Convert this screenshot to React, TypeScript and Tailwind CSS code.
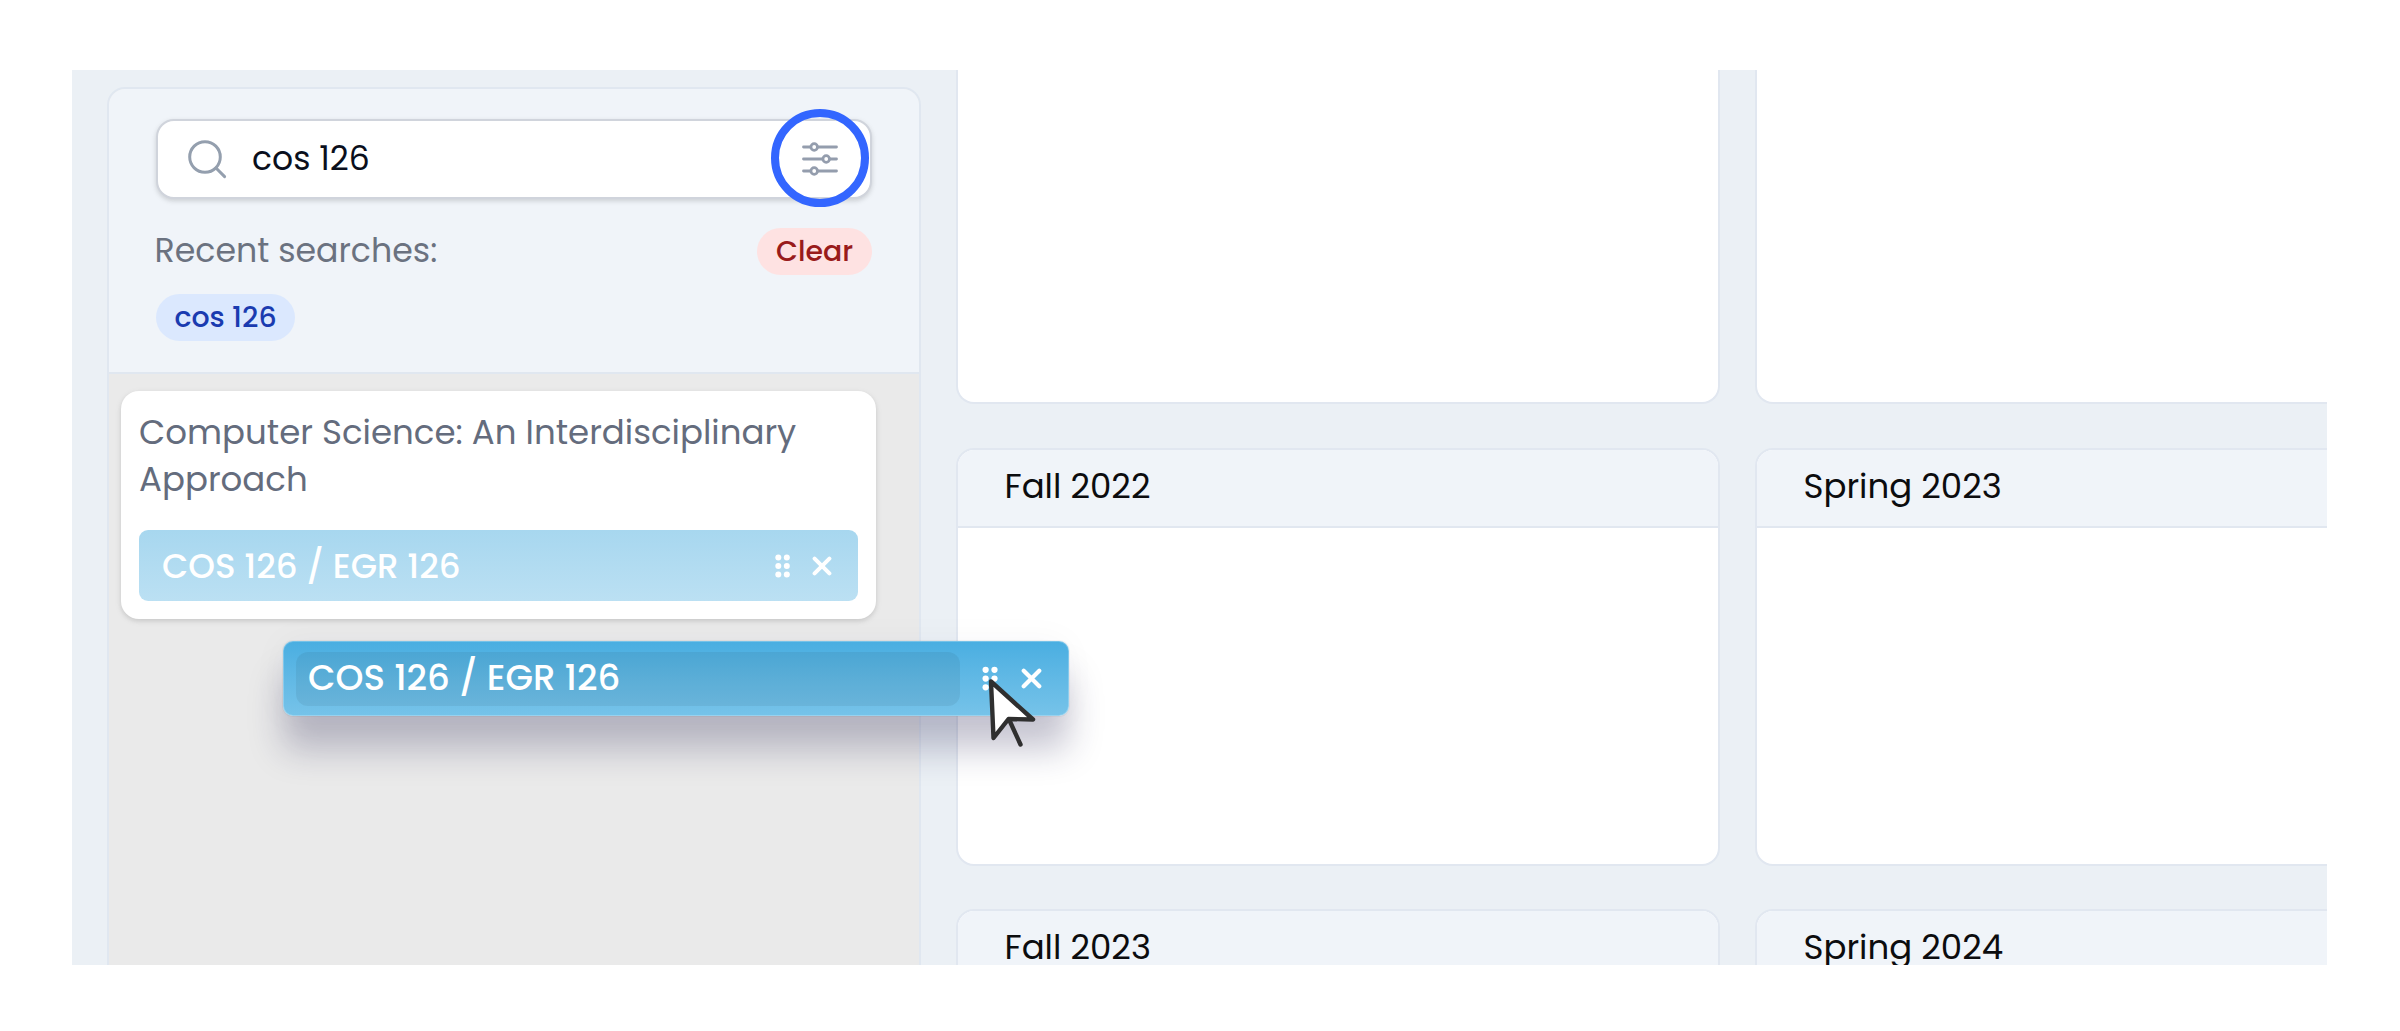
import React from "react";

function Handle({ w, h }: { w: number; h: number }) {
  return (
    <svg width={w} height={h} viewBox="0 0 15 24" fill="currentColor">
      {[3.3, 11.8].map((x) => [3.6, 12, 20.4].map((y) => <circle key={`${x}-${y}`} cx={x} cy={y} r="3" />))}
    </svg>
  );
}

function Cross({ size }: { size: number }) {
  return (
    <svg width={size} height={size} viewBox="0 0 20 20" stroke="currentColor" strokeWidth="4" strokeLinecap="round">
      <path d="M2.6 2.6L17.4 17.4M17.4 2.6L2.6 17.4" />
    </svg>
  );
}

function Semester({ name, className }: { name?: string; className: string }) {
  return (
    <section className={`w-[764px] shrink-0 border-2 border-[#e1e7f0] bg-white ${className}`}>
      {name && (
        <h2 className="h-[78px] rounded-t-[16px] border-b-2 border-[#e1e7f0] bg-[#f0f4f9] pl-[46.5px] text-[34px] leading-[73px] text-[#0c0c0e]">
          {name}
        </h2>
      )}
    </section>
  );
}

export default function App() {
  return (
    <div className="h-[1031px] w-[2400px] overflow-hidden bg-white pl-[72px] pt-[70px] font-['Poppins','Inter',sans-serif]">
      <main className="relative flex h-[895px] w-[2255px] overflow-hidden bg-[#ebf0f5]">
        <aside className="ml-[35px] mt-[17px] flex h-[900px] w-[814px] shrink-0 flex-col overflow-hidden rounded-t-[18px] border-2 border-[#e0e7f0] bg-[#eaeaea]">
          <header className="h-[285px] shrink-0 border-b-2 border-[#e0e7f0] bg-[#f0f4f9] pl-[47px] pr-[47px] pt-[30px]">
            <div className="relative flex h-20 items-center rounded-[18px] border-2 border-[#d0d4dc] bg-white pl-[29px] pr-[32px] shadow-[0_2px_4px_rgba(0,0,0,0.10),0_2px_7px_rgba(0,0,0,0.06)]">
              <svg width="40" height="40" viewBox="0 0 40 40" fill="none" stroke="#949fae" strokeWidth="3" strokeLinecap="round">
                <circle cx="18" cy="18" r="15.3" />
                <path d="M29 29L37.6 37.6" />
              </svg>
              <span className="ml-[25px] text-[33px] leading-[48px] text-[#0a0f1c]">cos 126</span>
              <svg className="ml-auto" width="36" height="34" viewBox="0 0 36 34" fill="none" stroke="#949dad" strokeWidth="2.8" strokeLinecap="round">
                <path d="M1.5 5H8.5M16 5H34.5M1.5 17H20.5M28 17H34.5M1.5 29H8.5M16 29H34.5" />
                <circle cx="12.2" cy="5" r="3.3" />
                <circle cx="24.2" cy="17" r="3.3" />
                <circle cx="12.2" cy="29" r="3.3" />
              </svg>
              <div className="absolute right-px top-[-12px] size-[98px] rounded-full border-8 border-[#3366ff]" />
            </div>
            <div className="mt-[29px] flex h-[47px] justify-between">
              <span className="-ml-[1.5px] text-[33.2px] leading-[45px] text-[#6b7280]">Recent searches:</span>
              <button className="h-[47px] w-[115px] rounded-full bg-[#fee2e2] pb-px text-center text-[28.4px] leading-[46px] font-medium text-[#991b1b]">
                Clear
              </button>
            </div>
            <button className="mt-[19px] block h-[47px] w-[139px] rounded-full bg-[#dbe8fe] pb-px text-center text-[28.4px] leading-[46px] font-medium text-[#1a3bb0]">
              cos 126
            </button>
          </header>
          <div className="pl-3 pt-[17px]">
            <article className="h-[228px] w-[755px] rounded-[18px] bg-white px-[18px] pt-[17.5px] shadow-[0_2px_4px_rgba(0,0,0,0.08),0_2px_7px_rgba(0,0,0,0.08)]">
              <p className="text-[34px] leading-[47px] text-[#646c7d]">
                Computer Science: An Interdisciplinary
                <br />
                Approach
              </p>
              <div className="mt-[27.5px] flex h-[71px] items-center rounded-[9px] bg-linear-to-b from-[#a7d7ef] to-[#bbe0f3] pl-[23px] pr-[26px] text-white">
                <span className="text-[34px] leading-[48px] font-medium">COS 126 / EGR 126</span>
                <span className="ml-auto"><Handle w={15} h={24} /></span>
                <span className="ml-[22px]"><Cross size={20} /></span>
              </div>
            </article>
          </div>
        </aside>

        <div className="ml-[35px] flex flex-col">
          <div className="mb-11 flex gap-[35px]">
            <Semester className="h-[334px] rounded-b-[18px] border-t-0" />
            <Semester className="h-[334px] rounded-b-[18px] border-t-0" />
          </div>
          <div className="mb-[43px] flex gap-[35px]">
            <Semester name="Fall 2022" className="h-[418px] rounded-[18px]" />
            <Semester name="Spring 2023" className="h-[418px] rounded-[18px]" />
          </div>
          <div className="flex gap-[35px]">
            <Semester name="Fall 2023" className="h-[418px] rounded-[18px]" />
            <Semester name="Spring 2024" className="h-[418px] rounded-[18px]" />
          </div>
        </div>

        <div className="absolute left-[211px] top-[571px] flex h-[75px] w-[786px] items-center rounded-[10px] border border-white/25 bg-linear-to-b from-[#49aee1] to-[#76c3e9] bg-origin-border pl-3 pr-[26px] text-white shadow-[0_0_0_1px_rgba(63,63,68,0.05),-2px_0_34px_rgba(34,33,81,0.04),0_34px_34px_rgba(34,33,81,0.25)]">
          <div className="h-[54px] w-[664px] rounded-xl bg-black/6 pl-3">
            <span className="block text-[35.6px] leading-[51px] font-medium">COS 126 / EGR 126</span>
          </div>
          <span className="ml-auto"><Handle w={16} h={25} /></span>
          <span className="ml-[23px]"><Cross size={21} /></span>
        </div>
        <svg className="absolute left-[914px] top-[605px]" width="52" height="76" viewBox="0 0 52 76" fill="none" stroke="#2f2f2f" strokeWidth="4.4" strokeLinejoin="round" strokeLinecap="round">
          <path d="M5 6.5L47 44.5L22.5 44L7.5 63Z" fill="#fff" />
          <path d="M23.5 45.5L34.5 69.5" />
        </svg>
      </main>
    </div>
  );
}
